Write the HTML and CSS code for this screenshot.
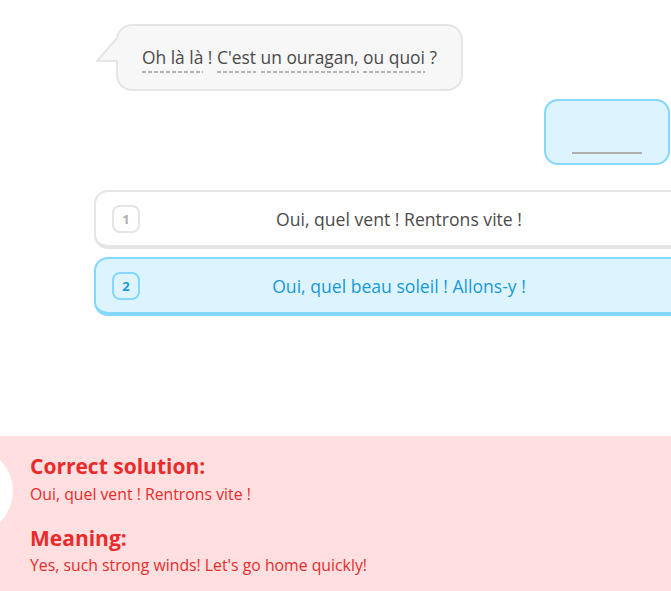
FILE: index.html
```html
<!DOCTYPE html>
<html lang="fr">
<head>
<meta charset="utf-8">
<link rel="stylesheet" href="styles.css">
</head>
<body>
<div class="page">
  <main class="chat">
    <div class="prompt-row">
      <div class="bubble">
        <svg class="tail" width="24" height="26" viewBox="0 0 24 26">
          <polygon points="23,0 1,24 23,24" fill="#f7f7f7"/>
          <polyline points="21,1 1,24 22,24" fill="none" stroke="#e5e5e5" stroke-width="2"/>
        </svg>
        <p class="prompt"><span class="hint">Oh là là</span> ! <span class="hint">C'est</span> <span class="hint">un ouragan,</span> <span class="hint">ou quoi</span> ?</p>
      </div>
    </div>
    <div class="answer-row">
      <div class="answer"><span class="blank"></span></div>
    </div>
    <ul class="options">
      <li class="option">
        <span class="key">1</span>
        <span class="label">Oui, quel vent ! Rentrons vite !</span>
      </li>
      <li class="option selected">
        <span class="key">2</span>
        <span class="label">Oui, quel beau soleil ! Allons-y !</span>
      </li>
    </ul>
  </main>
  <footer class="feedback">
    <div class="badge-circle"></div>
    <h2 class="fb-title">Correct solution:</h2>
    <p class="fb-text">Oui, quel vent ! Rentrons vite !</p>
    <h2 class="fb-title second">Meaning:</h2>
    <p class="fb-text">Yes, such strong winds! Let's go home quickly!</p>
  </footer>
</div>
</body>
</html>
```
FILE: styles.css
```css
html, body {
  margin: 0;
  padding: 0;
  overflow: hidden;
  background: #fff;
}
body {
  font-family: "Open Sans", "Noto Sans", sans-serif;
  color: #4b4b4b;
}
.page {
  height: 591px;
  display: flex;
  flex-direction: column;
}
.chat {
  padding-top: 24px;
}
.prompt-row {
  display: flex;
  padding-left: 116px;
}
.bubble {
  position: relative;
  background: #f7f7f7;
  border: 2px solid #e5e5e5;
  border-radius: 16px;
  padding: 19px 24px 20px 24px;
}
.tail {
  position: absolute;
  left: -22px;
  top: 11px;
  display: block;
}
.prompt {
  margin: 0;
  font-size: 17.4px;
  line-height: 24px;
  white-space: nowrap;
}
.hint {
  padding-bottom: 4px;
  background-image: repeating-linear-gradient(to right, #b4b4b4 0 4px, transparent 4px 6px);
  background-size: 100% 2px;
  background-repeat: no-repeat;
  background-position: left bottom;
}
.answer-row {
  display: flex;
  justify-content: flex-end;
  margin-top: 8px;
  padding-right: 1px;
}
.answer {
  box-sizing: border-box;
  width: 126px;
  height: 66px;
  border: 2px solid #84d8ff;
  background: #ddf4ff;
  border-radius: 14px;
  display: flex;
  justify-content: center;
  align-items: flex-end;
  padding-bottom: 9px;
}
.blank {
  display: block;
  width: 70px;
  height: 2px;
  background: #afafaf;
}
.options {
  list-style: none;
  margin: 25px 0 0 94px;
  padding: 0;
  width: 610px;
  display: flex;
  flex-direction: column;
  gap: 8px;
}
.option {
  box-sizing: border-box;
  height: 59px;
  border: 2px solid #e5e5e5;
  border-bottom-width: 4px;
  border-radius: 14px;
  background: #fff;
  padding: 0 16px;
  display: grid;
  grid-template-columns: 28px 1fr 28px;
  align-items: center;
}
.key {
  box-sizing: border-box;
  width: 28px;
  height: 28px;
  border: 2px solid #e5e5e5;
  border-radius: 8px;
  display: flex;
  align-items: center;
  justify-content: center;
  font-size: 13px;
  font-weight: 700;
  color: #afafaf;
}
.label {
  text-align: center;
  font-size: 17.6px;
  line-height: 24px;
  white-space: nowrap;
}
.option.selected {
  background: #ddf4ff;
  border-color: #84d8ff;
}
.option.selected .key {
  border-color: #84d8ff;
  color: #1899d6;
}
.option.selected .label {
  color: #1899d6;
}
.feedback {
  margin-top: auto;
  height: 155px;
  box-sizing: border-box;
  background: #ffdfe0;
  position: relative;
  overflow: hidden;
  padding: 17px 0 0 30px;
  color: #ea2b2b;
}
.badge-circle {
  position: absolute;
  left: -75px;
  top: 11px;
  width: 88px;
  height: 88px;
  border-radius: 50%;
  background: #fff;
}
.fb-title {
  margin: 0;
  font-size: 21px;
  line-height: 26px;
  font-weight: 700;
}
.fb-title.second {
  margin-top: 20px;
}
.fb-text {
  margin: 4px 0 0;
  font-size: 15.8px;
  line-height: 22px;
}
.fb-title.second + .fb-text {
  margin-top: 3px;
}
```
